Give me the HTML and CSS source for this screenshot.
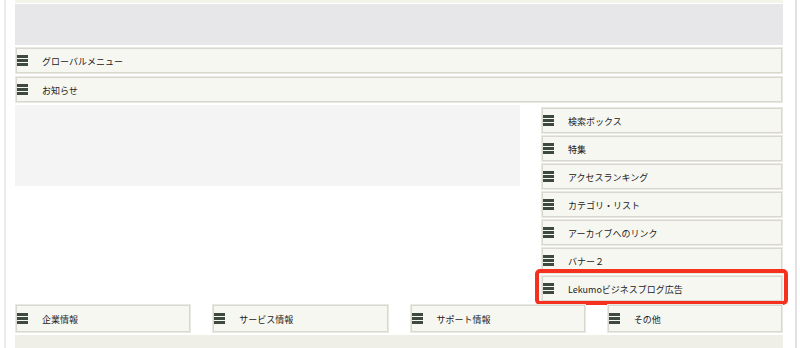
FILE: index.html
```html
<!DOCTYPE html>
<html lang="ja">
<head>
    <meta charset="UTF-8">
    <meta name="viewport" content="width=device-width, initial-scale=1.0">
    <title>レイアウト</title>
    <link rel="stylesheet" href="styles.css">
</head>
<body>
    <div class="page">
        <div class="top-strip"></div>
        <div class="header"></div>

        <div class="box wide"><svg class="icon" viewBox="0 0 11 11"><rect y="0" width="11" height="3"/><rect y="4" width="11" height="3"/><rect y="8" width="11" height="3"/></svg><span>グローバルメニュー</span></div>
        <div class="box wide"><svg class="icon" viewBox="0 0 11 11"><rect y="0" width="11" height="3"/><rect y="4" width="11" height="3"/><rect y="8" width="11" height="3"/></svg><span>お知らせ</span></div>

        <div class="main">
            <div class="content"></div>
            <div class="sidebar">
                <div class="box"><svg class="icon" viewBox="0 0 11 11"><rect y="0" width="11" height="3"/><rect y="4" width="11" height="3"/><rect y="8" width="11" height="3"/></svg><span>検索ボックス</span></div>
                <div class="box"><svg class="icon" viewBox="0 0 11 11"><rect y="0" width="11" height="3"/><rect y="4" width="11" height="3"/><rect y="8" width="11" height="3"/></svg><span>特集</span></div>
                <div class="box"><svg class="icon" viewBox="0 0 11 11"><rect y="0" width="11" height="3"/><rect y="4" width="11" height="3"/><rect y="8" width="11" height="3"/></svg><span>アクセスランキング</span></div>
                <div class="box"><svg class="icon" viewBox="0 0 11 11"><rect y="0" width="11" height="3"/><rect y="4" width="11" height="3"/><rect y="8" width="11" height="3"/></svg><span>カテゴリ・リスト</span></div>
                <div class="box"><svg class="icon" viewBox="0 0 11 11"><rect y="0" width="11" height="3"/><rect y="4" width="11" height="3"/><rect y="8" width="11" height="3"/></svg><span>アーカイブへのリンク</span></div>
                <div class="box"><svg class="icon" viewBox="0 0 11 11"><rect y="0" width="11" height="3"/><rect y="4" width="11" height="3"/><rect y="8" width="11" height="3"/></svg><span>バナー２</span></div>
                <div class="box highlighted"><svg class="icon" viewBox="0 0 11 11"><rect y="0" width="11" height="3"/><rect y="4" width="11" height="3"/><rect y="8" width="11" height="3"/></svg><span>Lekumoビジネスブログ広告</span></div>
            </div>
        </div>

        <div class="footer">
            <div class="box tall"><svg class="icon" viewBox="0 0 11 11"><rect y="0" width="11" height="3"/><rect y="4" width="11" height="3"/><rect y="8" width="11" height="3"/></svg><span>企業情報</span></div>
            <div class="box tall"><svg class="icon" viewBox="0 0 11 11"><rect y="0" width="11" height="3"/><rect y="4" width="11" height="3"/><rect y="8" width="11" height="3"/></svg><span>サービス情報</span></div>
            <div class="box tall"><svg class="icon" viewBox="0 0 11 11"><rect y="0" width="11" height="3"/><rect y="4" width="11" height="3"/><rect y="8" width="11" height="3"/></svg><span>サポート情報</span></div>
            <div class="box tall"><svg class="icon" viewBox="0 0 11 11"><rect y="0" width="11" height="3"/><rect y="4" width="11" height="3"/><rect y="8" width="11" height="3"/></svg><span>その他</span></div>
        </div>

        <div class="bottom-strip"></div>
    </div>
</body>
</html>
```

FILE: styles.css
```css
html, body {
    margin: 0;
    height: 100%;
    background-color: #ffffff;
}
body {
    font-family: "Noto Sans CJK JP", "Noto Sans", sans-serif;
    font-size: 9px;
    color: #222222;
    overflow: hidden;
}
.page {
    margin: 0 3px 0 4px;
    height: 100%;
    border-left: 2px solid #ebebeb;
    border-right: 2px solid #e2e2e2;
    padding: 0 12px 0 9px;
    box-sizing: border-box;
}
.top-strip {
    height: 3px;
    background-color: #f4f4ea;
}
.header {
    height: 41px;
    margin-top: 1px;
    margin-bottom: 2px;
    background-color: #e7e7e9;
}
.box {
    display: flex;
    align-items: center;
    height: 27px;
    box-sizing: border-box;
    margin-bottom: 1px;
    background-color: #f7f7f2;
    border: 1px solid #e9e9e2;
    box-shadow: inset 0 0 0 1px #d8d8d0;
    position: relative;
}
.box span {
    padding-top: 2px;
}
.box.wide {
    margin-bottom: 2px;
}
.box.tall {
    height: 29px;
    margin-bottom: 0;
}
.icon {
    width: 11px;
    height: 11px;
    margin-left: 1px;
    margin-right: 14px;
    fill: #3e4a3d;
    flex-shrink: 0;
}
.main {
    display: flex;
    justify-content: space-between;
    align-items: flex-start;
    margin-top: 1px;
}
.content {
    width: 505px;
    height: 81px;
    background-color: #f4f4f4;
}
.sidebar {
    width: 242px;
    margin-top: 2px;
}
.highlighted::after {
    content: "";
    position: absolute;
    top: -7px;
    left: -7px;
    right: -6px;
    bottom: -4px;
    border: 4.5px solid #f6301f;
    border-radius: 5px;
}
.footer {
    display: grid;
    grid-template-columns: repeat(4, 1fr);
    gap: 21px;
    margin-top: 1px;
}
.bottom-strip {
    height: 20px;
    margin-top: 2px;
    background-color: #efefe8;
}
```
